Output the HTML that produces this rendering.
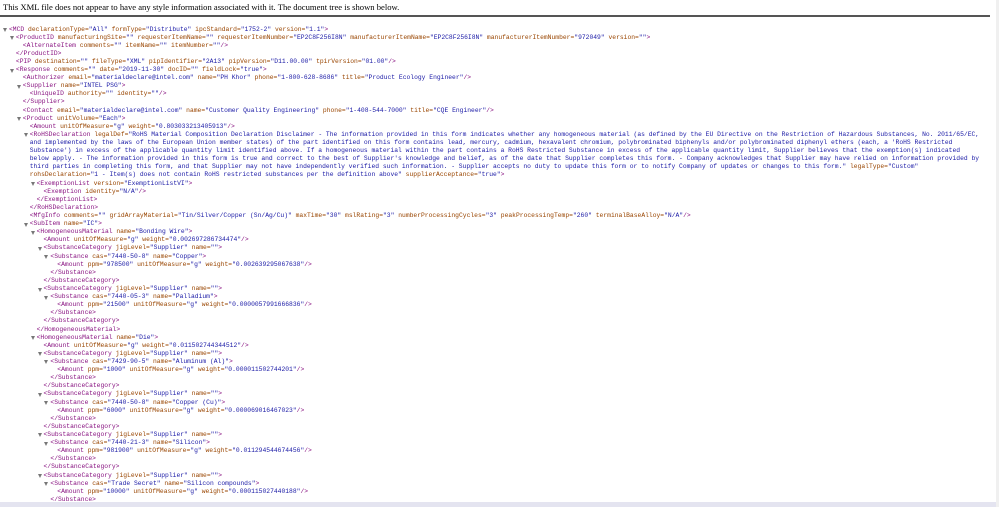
<!DOCTYPE html>
<html><head><meta charset="utf-8"><style>
html,body{margin:0;padding:0;background:#fff;width:999px;height:507px;overflow:hidden;position:relative}
.hd{position:absolute;left:3px;top:2px;font:8.6px "Liberation Serif",serif;color:#000;white-space:nowrap}
.rule{position:absolute;left:0;top:15px;width:990px;height:2px;background:#555}
.sb{position:absolute;left:996px;top:0;width:3px;height:507px;background:#f0f0f0}
.bb{position:absolute;left:0;top:502px;width:999px;height:5px;background:#e4e4f0}
.tree{position:absolute;left:0;top:25.5px;font:6.33px/8.12px "Liberation Mono",monospace}
.l{position:relative;padding-left:calc(9px + var(--i)*6.9px);height:8.12px;white-space:pre}
.c::before{content:"";position:absolute;left:calc(3px + var(--i)*6.9px);top:2.5px;border-left:2.3px solid transparent;border-right:2.3px solid transparent;border-top:4px solid #777}
.t{color:#881280}.a{color:#994500}.v{color:#1a1aa6}
</style></head><body>
<div class="hd">This XML file does not appear to have any style information associated with it. The document tree is shown below.</div>
<div class="rule"></div>
<div class="tree">
<div class="l c" style="--i:0"><span class=t>&lt;MCD</span> <span class=a>declarationType=</span><span class=v>"All"</span> <span class=a>formType=</span><span class=v>"Distribute"</span> <span class=a>ipcStandard=</span><span class=v>"1752-2"</span> <span class=a>version=</span><span class=v>"1.1"</span><span class=t>&gt;</span></div>
<div class="l c" style="--i:1"><span class=t>&lt;ProductID</span> <span class=a>manufacturingSite=</span><span class=v>""</span> <span class=a>requesterItemName=</span><span class=v>""</span> <span class=a>requesterItemNumber=</span><span class=v>"EP2C8F256I8N"</span> <span class=a>manufacturerItemName=</span><span class=v>"EP2C8F256I8N"</span> <span class=a>manufacturerItemNumber=</span><span class=v>"972049"</span> <span class=a>version=</span><span class=v>""</span><span class=t>&gt;</span></div>
<div class="l" style="--i:2"><span class=t>&lt;AlternateItem</span> <span class=a>comments=</span><span class=v>""</span> <span class=a>itemName=</span><span class=v>""</span> <span class=a>itemNumber=</span><span class=v>""</span><span class=t>/&gt;</span></div>
<div class="l" style="--i:1"><span class=t>&lt;/ProductID&gt;</span></div>
<div class="l" style="--i:1"><span class=t>&lt;PIP</span> <span class=a>destination=</span><span class=v>""</span> <span class=a>fileType=</span><span class=v>"XML"</span> <span class=a>pipIdentifier=</span><span class=v>"2A13"</span> <span class=a>pipVersion=</span><span class=v>"D11.00.00"</span> <span class=a>tpirVersion=</span><span class=v>"01.00"</span><span class=t>/&gt;</span></div>
<div class="l c" style="--i:1"><span class=t>&lt;Response</span> <span class=a>comments=</span><span class=v>""</span> <span class=a>date=</span><span class=v>"2019-11-30"</span> <span class=a>docID=</span><span class=v>""</span> <span class=a>fieldLock=</span><span class=v>"true"</span><span class=t>&gt;</span></div>
<div class="l" style="--i:2"><span class=t>&lt;Authorizer</span> <span class=a>email=</span><span class=v>"materialdeclare@intel.com"</span> <span class=a>name=</span><span class=v>"PH Khor"</span> <span class=a>phone=</span><span class=v>"1-800-628-8686"</span> <span class=a>title=</span><span class=v>"Product Ecology Engineer"</span><span class=t>/&gt;</span></div>
<div class="l c" style="--i:2"><span class=t>&lt;Supplier</span> <span class=a>name=</span><span class=v>"INTEL PSG"</span><span class=t>&gt;</span></div>
<div class="l" style="--i:3"><span class=t>&lt;UniqueID</span> <span class=a>authority=</span><span class=v>""</span> <span class=a>identity=</span><span class=v>""</span><span class=t>/&gt;</span></div>
<div class="l" style="--i:2"><span class=t>&lt;/Supplier&gt;</span></div>
<div class="l" style="--i:2"><span class=t>&lt;Contact</span> <span class=a>email=</span><span class=v>"materialdeclare@intel.com"</span> <span class=a>name=</span><span class=v>"Customer Quality Engineering"</span> <span class=a>phone=</span><span class=v>"1-408-544-7000"</span> <span class=a>title=</span><span class=v>"CQE Engineer"</span><span class=t>/&gt;</span></div>
<div class="l c" style="--i:2"><span class=t>&lt;Product</span> <span class=a>unitVolume=</span><span class=v>"Each"</span><span class=t>&gt;</span></div>
<div class="l" style="--i:3"><span class=t>&lt;Amount</span> <span class=a>unitOfMeasure=</span><span class=v>"g"</span> <span class=a>weight=</span><span class=v>"0.803033213405913"</span><span class=t>/&gt;</span></div>
<div class="l c" style="--i:3"><span class=t>&lt;RoHSDeclaration</span> <span class=a>legalDef=</span><span class=v>"RoHS Material Composition Declaration Disclaimer - The information provided in this form indicates whether any homogeneous material (as defined by the EU Directive on the Restriction of Hazardous Substances, No. 2011/65/EC,</span></div>
<div class="l" style="--i:3"><span class=v>and implemented by the laws of the European Union member states) of the part identified on this form contains lead, mercury, cadmium, hexavalent chromium, polybrominated biphenyls and/or polybrominated diphenyl ethers (each, a 'RoHS Restricted</span></div>
<div class="l" style="--i:3"><span class=v>Substance') in excess of the applicable quantity limit identified above. If a homogeneous material within the part contains a RoHS Restricted Substance in excess of the applicable quantity limit, Supplier believes that the exemption(s) indicated</span></div>
<div class="l" style="--i:3"><span class=v>below apply. - The information provided in this form is true and correct to the best of Supplier's knowledge and belief, as of the date that Supplier completes this form. - Company acknowledges that Supplier may have relied on information provided by</span></div>
<div class="l" style="--i:3"><span class=v>third parties in completing this form, and that Supplier may not have independently verified such information. - Supplier accepts no duty to update this form or to notify Company of updates or changes to this form."</span> <span class=a>legalType=</span><span class=v>"Custom"</span></div>
<div class="l" style="--i:3"><span class=a>rohsDeclaration=</span><span class=v>"1 - Item(s) does not contain RoHS restricted substances per the definition above"</span> <span class=a>supplierAcceptance=</span><span class=v>"true"</span><span class=t>&gt;</span></div>
<div class="l c" style="--i:4"><span class=t>&lt;ExemptionList</span> <span class=a>version=</span><span class=v>"ExemptionListVI"</span><span class=t>&gt;</span></div>
<div class="l" style="--i:5"><span class=t>&lt;Exemption</span> <span class=a>identity=</span><span class=v>"N/A"</span><span class=t>/&gt;</span></div>
<div class="l" style="--i:4"><span class=t>&lt;/ExemptionList&gt;</span></div>
<div class="l" style="--i:3"><span class=t>&lt;/RoHSDeclaration&gt;</span></div>
<div class="l" style="--i:3"><span class=t>&lt;MfgInfo</span> <span class=a>comments=</span><span class=v>""</span> <span class=a>gridArrayMaterial=</span><span class=v>"Tin/Silver/Copper (Sn/Ag/Cu)"</span> <span class=a>maxTime=</span><span class=v>"30"</span> <span class=a>mslRating=</span><span class=v>"3"</span> <span class=a>numberProcessingCycles=</span><span class=v>"3"</span> <span class=a>peakProcessingTemp=</span><span class=v>"260"</span> <span class=a>terminalBaseAlloy=</span><span class=v>"N/A"</span><span class=t>/&gt;</span></div>
<div class="l c" style="--i:3"><span class=t>&lt;SubItem</span> <span class=a>name=</span><span class=v>"IC"</span><span class=t>&gt;</span></div>
<div class="l c" style="--i:4"><span class=t>&lt;HomogeneousMaterial</span> <span class=a>name=</span><span class=v>"Bonding Wire"</span><span class=t>&gt;</span></div>
<div class="l" style="--i:5"><span class=t>&lt;Amount</span> <span class=a>unitOfMeasure=</span><span class=v>"g"</span> <span class=a>weight=</span><span class=v>"0.002697286734474"</span><span class=t>/&gt;</span></div>
<div class="l c" style="--i:5"><span class=t>&lt;SubstanceCategory</span> <span class=a>jigLevel=</span><span class=v>"Supplier"</span> <span class=a>name=</span><span class=v>""</span><span class=t>&gt;</span></div>
<div class="l c" style="--i:6"><span class=t>&lt;Substance</span> <span class=a>cas=</span><span class=v>"7440-50-8"</span> <span class=a>name=</span><span class=v>"Copper"</span><span class=t>&gt;</span></div>
<div class="l" style="--i:7"><span class=t>&lt;Amount</span> <span class=a>ppm=</span><span class=v>"978500"</span> <span class=a>unitOfMeasure=</span><span class=v>"g"</span> <span class=a>weight=</span><span class=v>"0.002639295067638"</span><span class=t>/&gt;</span></div>
<div class="l" style="--i:6"><span class=t>&lt;/Substance&gt;</span></div>
<div class="l" style="--i:5"><span class=t>&lt;/SubstanceCategory&gt;</span></div>
<div class="l c" style="--i:5"><span class=t>&lt;SubstanceCategory</span> <span class=a>jigLevel=</span><span class=v>"Supplier"</span> <span class=a>name=</span><span class=v>""</span><span class=t>&gt;</span></div>
<div class="l c" style="--i:6"><span class=t>&lt;Substance</span> <span class=a>cas=</span><span class=v>"7440-05-3"</span> <span class=a>name=</span><span class=v>"Palladium"</span><span class=t>&gt;</span></div>
<div class="l" style="--i:7"><span class=t>&lt;Amount</span> <span class=a>ppm=</span><span class=v>"21500"</span> <span class=a>unitOfMeasure=</span><span class=v>"g"</span> <span class=a>weight=</span><span class=v>"0.0000057991666836"</span><span class=t>/&gt;</span></div>
<div class="l" style="--i:6"><span class=t>&lt;/Substance&gt;</span></div>
<div class="l" style="--i:5"><span class=t>&lt;/SubstanceCategory&gt;</span></div>
<div class="l" style="--i:4"><span class=t>&lt;/HomogeneousMaterial&gt;</span></div>
<div class="l c" style="--i:4"><span class=t>&lt;HomogeneousMaterial</span> <span class=a>name=</span><span class=v>"Die"</span><span class=t>&gt;</span></div>
<div class="l" style="--i:5"><span class=t>&lt;Amount</span> <span class=a>unitOfMeasure=</span><span class=v>"g"</span> <span class=a>weight=</span><span class=v>"0.011502744344512"</span><span class=t>/&gt;</span></div>
<div class="l c" style="--i:5"><span class=t>&lt;SubstanceCategory</span> <span class=a>jigLevel=</span><span class=v>"Supplier"</span> <span class=a>name=</span><span class=v>""</span><span class=t>&gt;</span></div>
<div class="l c" style="--i:6"><span class=t>&lt;Substance</span> <span class=a>cas=</span><span class=v>"7429-90-5"</span> <span class=a>name=</span><span class=v>"Aluminum (Al)"</span><span class=t>&gt;</span></div>
<div class="l" style="--i:7"><span class=t>&lt;Amount</span> <span class=a>ppm=</span><span class=v>"1000"</span> <span class=a>unitOfMeasure=</span><span class=v>"g"</span> <span class=a>weight=</span><span class=v>"0.000011502744201"</span><span class=t>/&gt;</span></div>
<div class="l" style="--i:6"><span class=t>&lt;/Substance&gt;</span></div>
<div class="l" style="--i:5"><span class=t>&lt;/SubstanceCategory&gt;</span></div>
<div class="l c" style="--i:5"><span class=t>&lt;SubstanceCategory</span> <span class=a>jigLevel=</span><span class=v>"Supplier"</span> <span class=a>name=</span><span class=v>""</span><span class=t>&gt;</span></div>
<div class="l c" style="--i:6"><span class=t>&lt;Substance</span> <span class=a>cas=</span><span class=v>"7440-50-8"</span> <span class=a>name=</span><span class=v>"Copper (Cu)"</span><span class=t>&gt;</span></div>
<div class="l" style="--i:7"><span class=t>&lt;Amount</span> <span class=a>ppm=</span><span class=v>"6000"</span> <span class=a>unitOfMeasure=</span><span class=v>"g"</span> <span class=a>weight=</span><span class=v>"0.000069016467023"</span><span class=t>/&gt;</span></div>
<div class="l" style="--i:6"><span class=t>&lt;/Substance&gt;</span></div>
<div class="l" style="--i:5"><span class=t>&lt;/SubstanceCategory&gt;</span></div>
<div class="l c" style="--i:5"><span class=t>&lt;SubstanceCategory</span> <span class=a>jigLevel=</span><span class=v>"Supplier"</span> <span class=a>name=</span><span class=v>""</span><span class=t>&gt;</span></div>
<div class="l c" style="--i:6"><span class=t>&lt;Substance</span> <span class=a>cas=</span><span class=v>"7440-21-3"</span> <span class=a>name=</span><span class=v>"Silicon"</span><span class=t>&gt;</span></div>
<div class="l" style="--i:7"><span class=t>&lt;Amount</span> <span class=a>ppm=</span><span class=v>"981900"</span> <span class=a>unitOfMeasure=</span><span class=v>"g"</span> <span class=a>weight=</span><span class=v>"0.011294544674456"</span><span class=t>/&gt;</span></div>
<div class="l" style="--i:6"><span class=t>&lt;/Substance&gt;</span></div>
<div class="l" style="--i:5"><span class=t>&lt;/SubstanceCategory&gt;</span></div>
<div class="l c" style="--i:5"><span class=t>&lt;SubstanceCategory</span> <span class=a>jigLevel=</span><span class=v>"Supplier"</span> <span class=a>name=</span><span class=v>""</span><span class=t>&gt;</span></div>
<div class="l c" style="--i:6"><span class=t>&lt;Substance</span> <span class=a>cas=</span><span class=v>"Trade Secret"</span> <span class=a>name=</span><span class=v>"Silicon compounds"</span><span class=t>&gt;</span></div>
<div class="l" style="--i:7"><span class=t>&lt;Amount</span> <span class=a>ppm=</span><span class=v>"10000"</span> <span class=a>unitOfMeasure=</span><span class=v>"g"</span> <span class=a>weight=</span><span class=v>"0.000115027440188"</span><span class=t>/&gt;</span></div>
<div class="l" style="--i:6"><span class=t>&lt;/Substance&gt;</span></div>
</div>
<div class="bb"></div>
<div class="sb"></div>
</body></html>
